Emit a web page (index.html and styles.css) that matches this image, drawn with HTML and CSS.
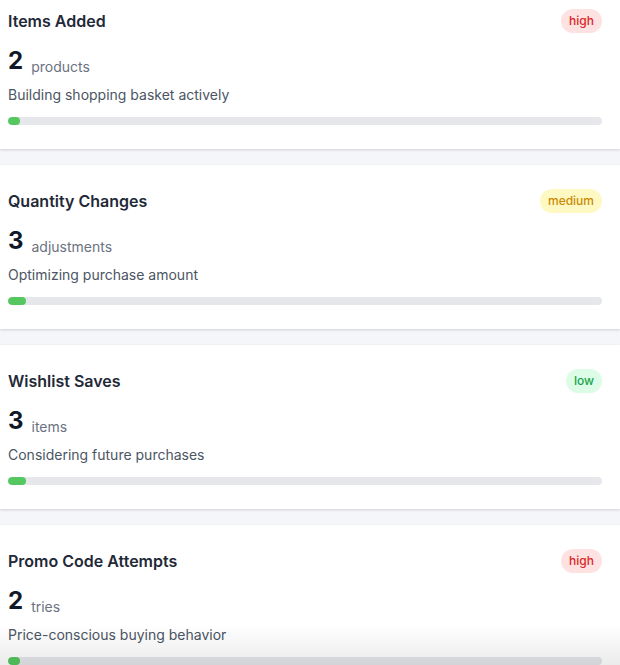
FILE: index.html
```html
<!DOCTYPE html>
<html lang="en">
<head>
<meta charset="utf-8">
<title>Shopping behavior</title>
<link rel="stylesheet" href="styles.css">
</head>
<body>
<div class="list">
  <section class="card">
    <div class="head"><h3 class="title">Items Added</h3><span class="badge high">high</span></div>
    <div class="count"><span class="num">2</span><span class="unit">products</span></div>
    <p class="desc">Building shopping basket actively</p>
    <div class="bar"><div class="fill" style="width:2%"></div></div>
  </section>
  <section class="card">
    <div class="head"><h3 class="title">Quantity Changes</h3><span class="badge medium">medium</span></div>
    <div class="count"><span class="num">3</span><span class="unit">adjustments</span></div>
    <p class="desc">Optimizing purchase amount</p>
    <div class="bar"><div class="fill" style="width:3%"></div></div>
  </section>
  <section class="card">
    <div class="head"><h3 class="title">Wishlist Saves</h3><span class="badge low">low</span></div>
    <div class="count"><span class="num">3</span><span class="unit">items</span></div>
    <p class="desc">Considering future purchases</p>
    <div class="bar"><div class="fill" style="width:3%"></div></div>
  </section>
  <section class="card">
    <div class="head"><h3 class="title">Promo Code Attempts</h3><span class="badge high">high</span></div>
    <div class="count"><span class="num">2</span><span class="unit">tries</span></div>
    <p class="desc">Price-conscious buying behavior</p>
    <div class="bar"><div class="fill" style="width:2%"></div></div>
  </section>
</div>
<div class="fade"></div>
</body>
</html>
```
FILE: styles.css
```css
html, body {
  margin: 0;
  padding: 0;
  height: 100%;
  overflow: hidden;
}
body {
  background: #f4f6f9;
  font-family: Inter, "Noto Sans", "Liberation Sans", sans-serif;
  color: #1f2937;
}
.list {
  display: flex;
  flex-direction: column;
  gap: 16px;
  margin-top: -15px;
}
.card {
  background: #ffffff;
  padding: 24px 18px 24px 8px;
  box-shadow: 0 1px 3px rgba(0, 0, 0, 0.1), 0 1px 2px rgba(0, 0, 0, 0.06);
}
.head {
  display: flex;
  justify-content: space-between;
  align-items: center;
  height: 24px;
}
.title {
  margin: 0;
  font-size: 16px;
  line-height: 24px;
  font-weight: 600;
  color: #1f2937;
}
.badge {
  font-size: 12px;
  line-height: 16px;
  font-weight: 500;
  padding: 4px 8px;
  border-radius: 999px;
}
.badge.high { background: #fee2e2; color: #dc2626; }
.badge.medium { background: #fef9c3; color: #ca8a04; }
.badge.low { background: #dcfce7; color: #16a34a; }
.count {
  margin-top: 12px;
  display: flex;
  align-items: flex-end;
  gap: 8px;
  height: 32px;
}
.num {
  font-size: 24px;
  line-height: 32px;
  font-weight: 700;
  color: #111827;
}
.unit {
  font-size: 14px;
  line-height: 20px;
  color: #6b7280;
}
.desc {
  margin: 8px 0 0;
  font-size: 14px;
  line-height: 20px;
  color: #4b5563;
}
.bar {
  margin-top: 12px;
  height: 8px;
  background: #e5e7eb;
  border-radius: 999px;
  overflow: hidden;
}
.fill {
  height: 100%;
  background: #55c760;
  border-radius: 999px;
}
.fade {
  position: fixed;
  left: 0;
  right: 0;
  bottom: 0;
  height: 40px;
  background: linear-gradient(to bottom, rgba(0, 0, 0, 0), rgba(0, 0, 0, 0.08));
  pointer-events: none;
}
```
